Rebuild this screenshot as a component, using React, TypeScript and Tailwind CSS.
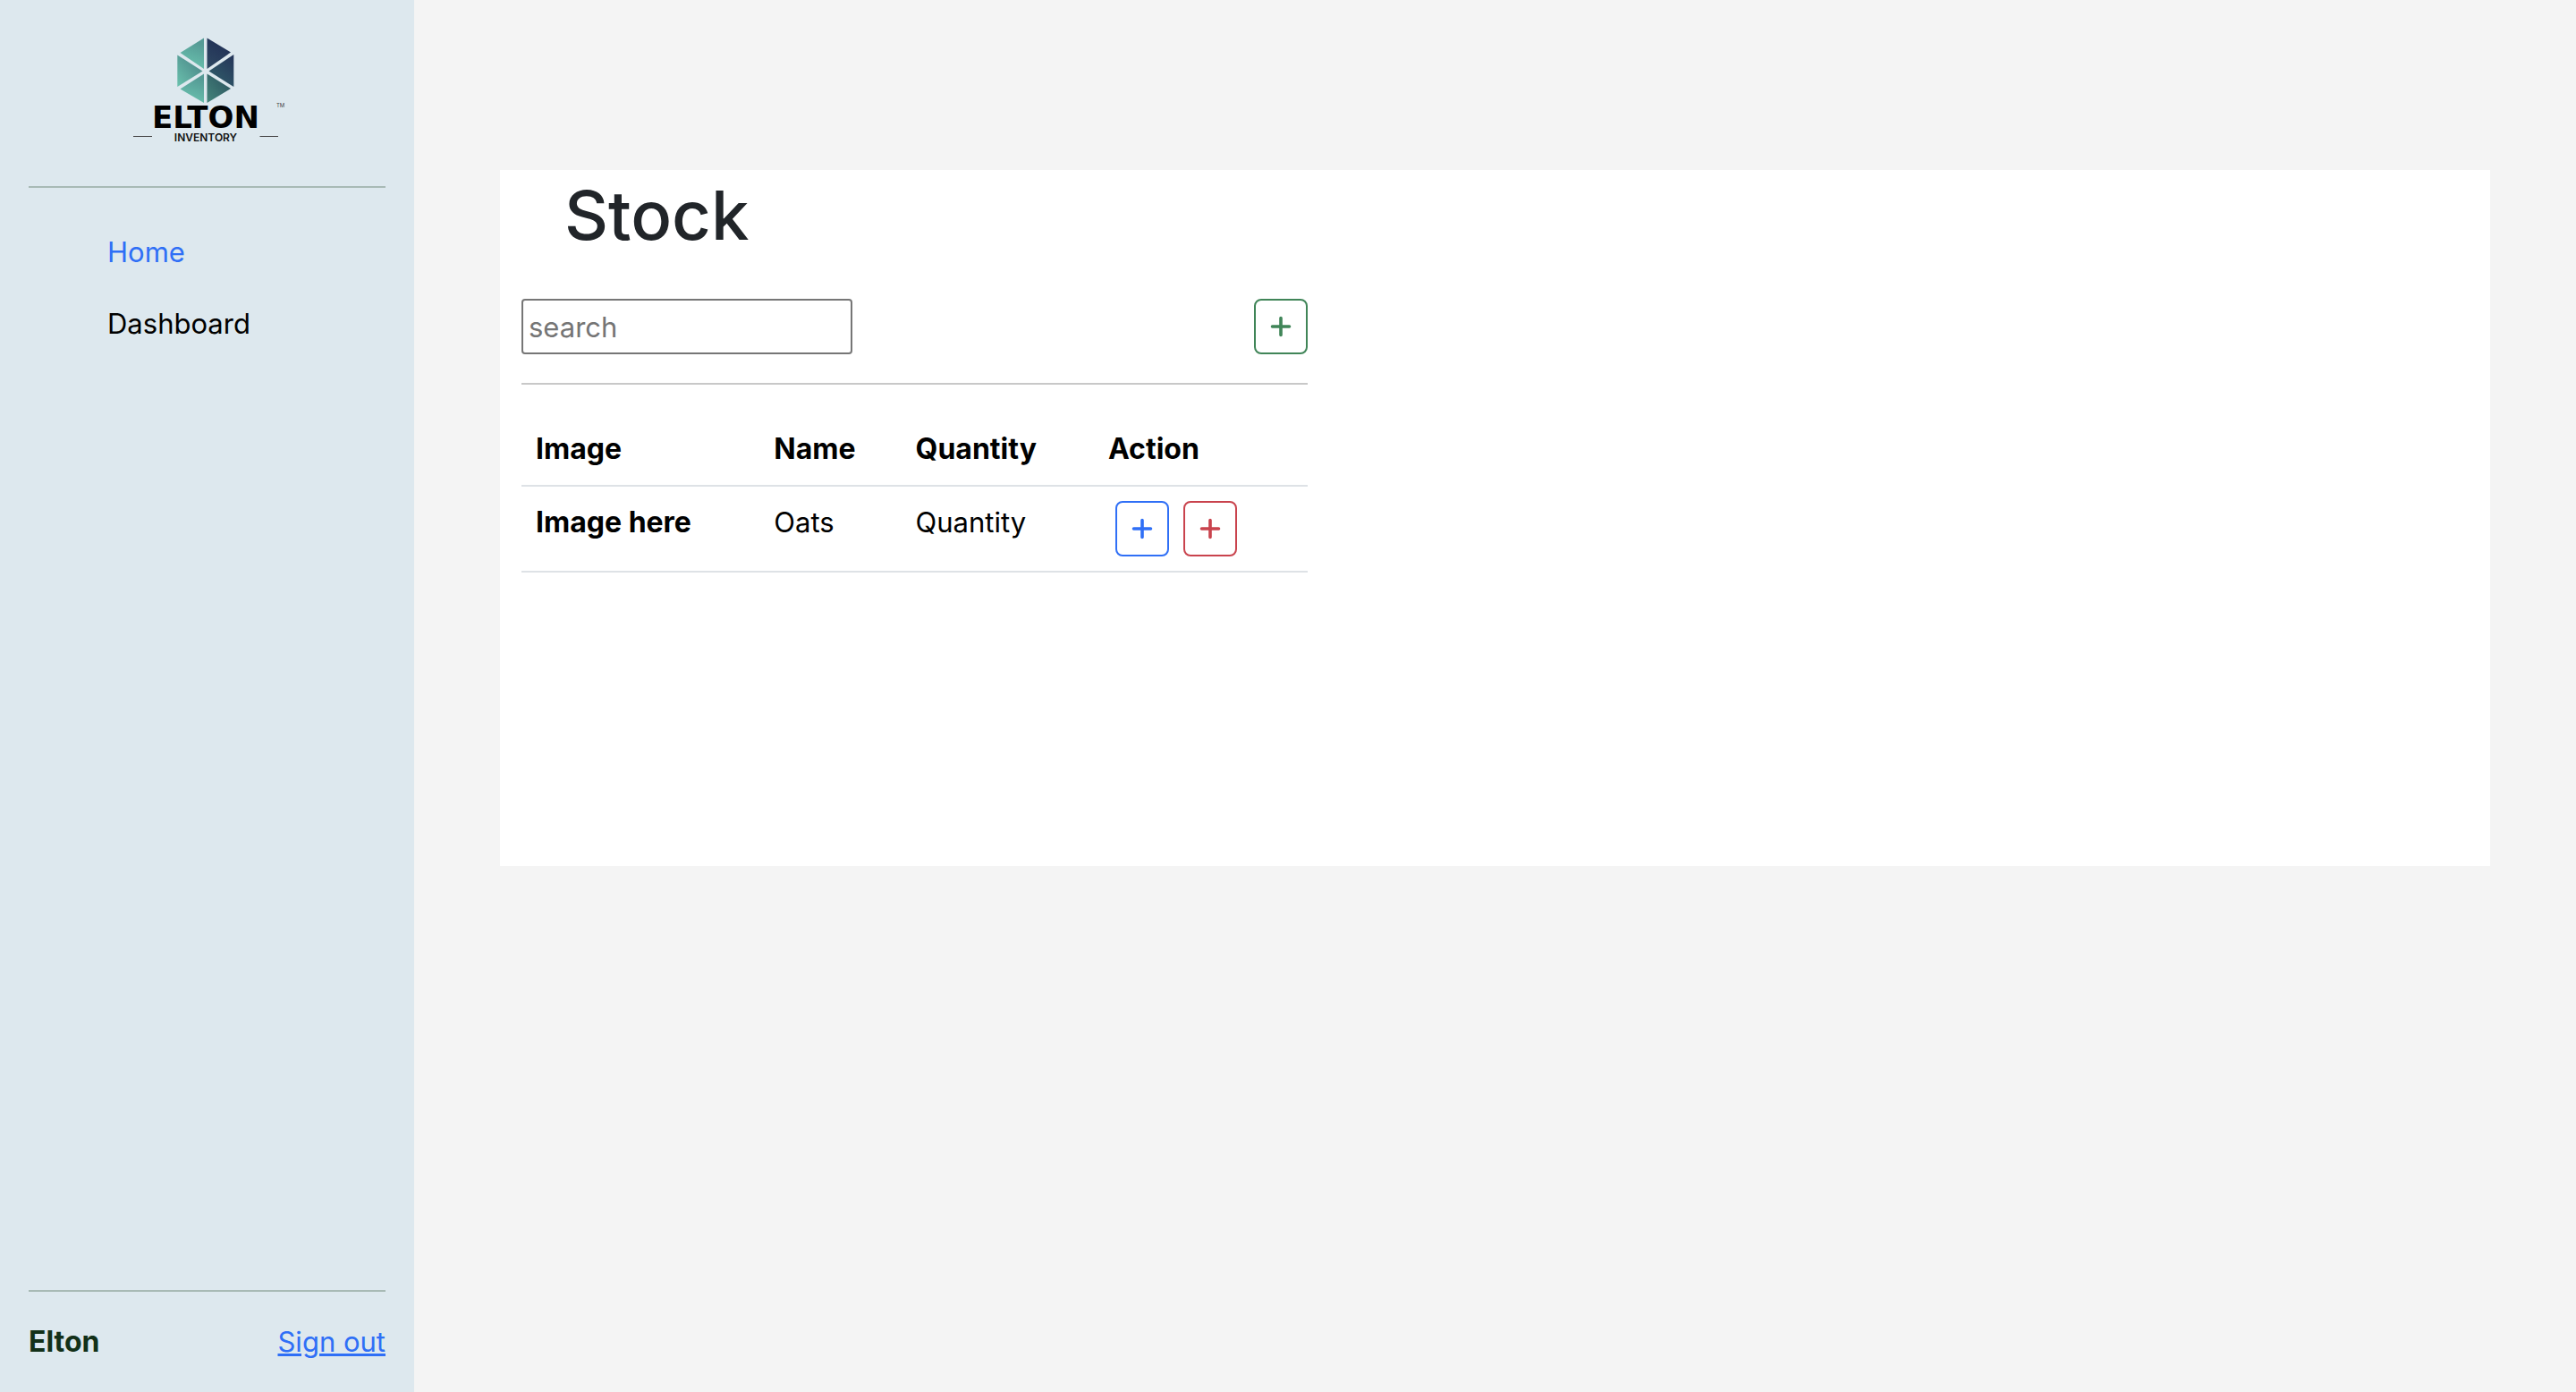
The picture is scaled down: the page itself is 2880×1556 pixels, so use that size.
import { useState } from "react";

const stock = [{ id: 1, image: "Image here", name: "Oats", quantity: "Quantity" }];

function Logo() {
  return (
    <svg viewBox="-3 2 210 140" className="h-[140px] w-[210px]" role="img" aria-label="Elton Inventory">
      <defs>
        <linearGradient id="teal" x1="0" y1="1" x2="0.3" y2="0">
          <stop offset="0" stopColor="#6cc8b2" />
          <stop offset="1" stopColor="#559a95" />
        </linearGradient>
        <linearGradient id="mint" gradientUnits="userSpaceOnUse" x1="68" y1="70" x2="98" y2="45">
          <stop offset="0" stopColor="#6cc5b0" />
          <stop offset="1" stopColor="#4d8a8a" />
        </linearGradient>
        <linearGradient id="navy" gradientUnits="userSpaceOnUse" x1="102" y1="50" x2="122" y2="20">
          <stop offset="0" stopColor="#2f4a63" />
          <stop offset="1" stopColor="#223257" />
        </linearGradient>
        <linearGradient id="slate" gradientUnits="userSpaceOnUse" x1="108" y1="60" x2="131" y2="35">
          <stop offset="0" stopColor="#2f5a68" />
          <stop offset="1" stopColor="#26375a" />
        </linearGradient>
        <linearGradient id="pine" gradientUnits="userSpaceOnUse" x1="101" y1="80" x2="126" y2="60">
          <stop offset="0" stopColor="#438279" />
          <stop offset="1" stopColor="#2e5762" />
        </linearGradient>
      </defs>
      <path d="M98 12.5V47L71.5 29Z" fill="url(#teal)" />
      <path d="M68.3 31.5L96.5 49.5L68.3 67Z" fill="url(#mint)" />
      <path d="M98 52.5V85L71.5 69.5Z" fill="url(#teal)" />
      <path d="M101.5 12.5L128 28.5L101.5 47Z" fill="url(#navy)" />
      <path d="M131.3 31V67L103.5 49.5Z" fill="url(#slate)" />
      <path d="M101.5 52.5L128 69L101.5 85Z" fill="url(#pine)" />
      <text x="100" y="113" textAnchor="middle" className="fill-black font-['DejaVu_Sans'] text-[34px] font-bold">
        ELTON
      </text>
      <text x="179" y="90" className="fill-[#444] font-['Inter'] text-[6px]">
        TM
      </text>
      <text x="100" y="128" textAnchor="middle" className="fill-[#111] font-['Inter'] text-[12px] font-semibold">
        INVENTORY
      </text>
      <path d="M19 122.500H40M160.500 122.500H181" stroke="#444" strokeWidth="1.200" />
    </svg>
  );
}

function PlusIcon() {
  return (
    <svg viewBox="0 0 28 28" className="size-7" aria-hidden="true">
      <path d="M14 4.500V23.500M4.500 14H23.500" stroke="currentColor" strokeWidth="3.600" strokeLinecap="round" />
    </svg>
  );
}

const tones = {
  green: "border-[#408558] text-[#408558]",
  blue: "border-[#2f6ff6] text-[#2f6ff6]",
  red: "border-[#c9434d] text-[#c9434d]",
};

function PlusButton({ tone, label }: { tone: keyof typeof tones; label: string }) {
  return (
    <button
      type="button"
      aria-label={label}
      className={`flex h-[62px] w-[60px] items-center justify-center rounded-lg border-2 bg-white ${tones[tone]}`}
    >
      <PlusIcon />
    </button>
  );
}

export default function App() {
  const [query, setQuery] = useState("");
  const rows = stock.filter((item) => item.name.toLowerCase().includes(query.toLowerCase()));

  return (
    <div className="flex min-h-screen bg-[#f4f4f4] font-['Inter',sans-serif] text-[31px] leading-[48px] text-black">
      <aside className="flex w-[463px] shrink-0 flex-col bg-[#dde8ee] p-8">
        <a href="#home" className="flex justify-center">
          <Logo />
        </a>
        <hr className="mt-9 mb-12 border-t-2 border-[#a8bab5]" />
        <nav className="flex flex-1 flex-col gap-8 px-[88px]">
          <a href="#home" className="text-[#2f6ff6]">Home</a>
          <a href="#dashboard">Dashboard</a>
        </nav>
        <hr className="mb-8 border-t-2 border-[#a8bab5]" />
        <div className="flex justify-between">
          <strong className="text-[32px] font-bold text-[#123018]">Elton</strong>
          <a href="#signout" className="text-[#2f6ff6] underline">Sign out</a>
        </div>
      </aside>

      <main className="flex-1 px-24 pt-[190px]">
        <section className="min-h-[50vh] bg-white">
          <h1 className="pl-[72px] text-[76px] leading-[100px] font-medium text-[#212529]">Stock</h1>
          <div className="mt-11 w-5/12 px-6">
            <div className="flex items-center justify-between">
              <input
                type="text"
                aria-label="Search stock"
                placeholder="search"
                value={query}
                onChange={(e) => setQuery(e.target.value)}
                className="h-[62px] w-[370px] rounded border-2 border-[#767676] bg-white px-1.5 placeholder:text-[#757575]"
              />
              <PlusButton tone="green" label="Add item" />
            </div>
            <hr className="my-8 border-t-2 border-[#c8c8c8]" />
            <table className="w-full table-fixed border-collapse text-left">
              <colgroup>
                <col className="w-[30.3%]" />
                <col className="w-[18%]" />
                <col className="w-[24.5%]" />
                <col />
              </colgroup>
              <thead>
                <tr className="border-b-2 border-[#dee2e6] text-[32px]">
                  <th scope="col" className="p-4 font-bold">Image</th>
                  <th scope="col" className="p-4 font-bold">Name</th>
                  <th scope="col" className="p-4 font-bold">Quantity</th>
                  <th scope="col" className="p-4 font-bold">Action</th>
                </tr>
              </thead>
              <tbody>
                {rows.map((item) => (
                  <tr key={item.id} className="border-b-2 border-[#dee2e6] align-top">
                    <th scope="row" className="p-4 text-[32px] font-bold">{item.image}</th>
                    <td className="p-4">{item.name}</td>
                    <td className="p-4">{item.quantity}</td>
                    <td className="p-4">
                      <div className="flex gap-4 px-2">
                        <PlusButton tone="blue" label="Increase quantity" />
                        <PlusButton tone="red" label="Remove item" />
                      </div>
                    </td>
                  </tr>
                ))}
              </tbody>
            </table>
          </div>
        </section>
      </main>
    </div>
  );
}
